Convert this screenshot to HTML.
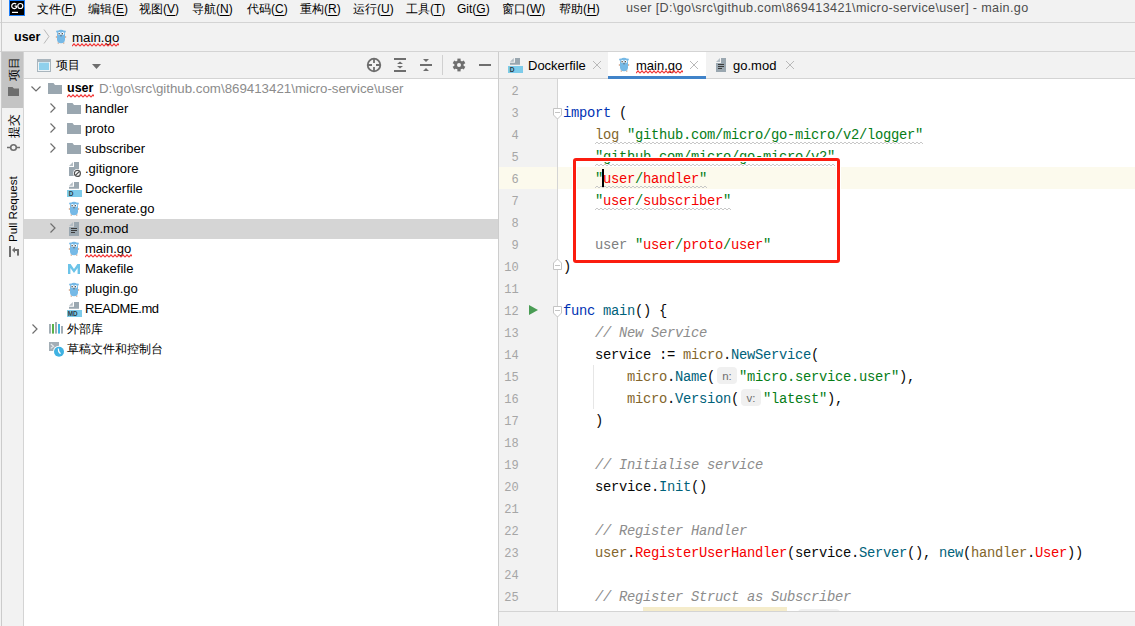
<!DOCTYPE html>
<html><head><meta charset="utf-8">
<style>
*{margin:0;padding:0;box-sizing:border-box}
html,body{width:1135px;height:626px;overflow:hidden;background:#fff;font-family:"Liberation Sans",sans-serif;font-size:13px;color:#000}
.a{position:absolute}
svg{position:absolute;overflow:visible}
#menubar{left:0;top:0;width:1135px;height:23px;background:#f2f2f2;border-bottom:1px solid #d4d4d4}
#menubar span{position:absolute;top:2px;font-size:12px;line-height:14px;white-space:nowrap}
#menubar u{text-decoration:none;border-bottom:1px solid #000;line-height:11px;display:inline-block}
#crumb{left:0;top:23px;width:1135px;height:29px;background:#f2f2f2;border-bottom:1px solid #d4d4d4}
#strip{left:0;top:52px;width:24px;height:574px;background:#f2f2f2;border-right:1px solid #d4d4d4}
#projhdr{left:24px;top:52px;width:475px;height:27px;background:#f2f2f2;border-bottom:1px solid #d4d4d4}
#tree{left:24px;top:79px;width:474px;height:547px;background:#fff}
#vdiv{left:498px;top:52px;width:1px;height:574px;background:#cdcdcd}
#tabs{left:499px;top:52px;width:636px;height:27px;background:#f2f2f2;border-bottom:1px solid #d4d4d4}
#gutter{left:499px;top:79px;width:59px;height:532px;background:#f2f2f2;border-right:1px solid #d4d4d4}
#code{left:558px;top:79px;width:577px;height:532px;background:#fff;overflow:hidden}
#bottom{left:499px;top:611px;width:636px;height:15px;background:#f2f2f2;border-top:1px solid #d4d4d4}
.row{position:absolute;left:0;height:20px;width:474px;white-space:nowrap}
.t{position:absolute;top:2px;font-size:13px;line-height:15px;white-space:nowrap}
.cjk{font-size:12px}
.ln{position:absolute;left:0;margin-top:2px;width:19.6px;text-align:right;font-family:"Liberation Mono",monospace;font-size:12px;line-height:22px;color:#a6a6a6}
.cl{position:absolute;left:5px;margin-top:2px;height:22px;line-height:22px;white-space:pre;font-family:"Liberation Mono",monospace;font-size:13.8px;letter-spacing:-0.28px;color:#080808}
.kw{color:#0033b3}.str{color:#067d17}.cm{color:#8c8c8c;font-style:italic}.pk{color:#83662c}.fn{color:#00627a}.er{color:#f50000}.gr{color:#808080}
.wv{background-image:linear-gradient(45deg,transparent 40%,#c4c4c4 40%,#c4c4c4 60%,transparent 60%),linear-gradient(-45deg,transparent 40%,#c4c4c4 40%,#c4c4c4 60%,transparent 60%);background-size:4px 3px;background-repeat:repeat-x;background-position:0 19px,2px 19px}
.hint{display:inline-block;vertical-align:top;margin-top:0;height:17px;width:20px;margin-left:2px;margin-right:2px;background:#f0f0f0;border-radius:4px;font-family:"Liberation Sans",sans-serif;font-size:11.5px;letter-spacing:0;line-height:19px;color:#6e6e6e;text-align:center;overflow:hidden}
.x{color:#b8b8b8;font-size:15px}
</style></head><body>
<div id="menubar" class="a">
  <div class="a" style="left:9px;top:0;width:16px;height:16px;background:#000;border:1px solid #1a7dfa"></div>
  <svg style="left:9px;top:0" width="16" height="16"><path d="M7.2 4.2 A2.6 2.6 0 1 0 7.4 7.6 L7.4 6.2 L5.6 6.2" fill="none" stroke="#fff" stroke-width="1.2"/><circle cx="11.3" cy="6" r="2.5" fill="none" stroke="#fff" stroke-width="1.2"/><rect x="3" y="11.8" width="6" height="1.2" fill="#fff"/></svg>
  <span style="left:37px">文件(<u>F</u>)</span>
  <span style="left:88px">编辑(<u>E</u>)</span>
  <span style="left:139px">视图(<u>V</u>)</span>
  <span style="left:192px">导航(<u>N</u>)</span>
  <span style="left:247px">代码(<u>C</u>)</span>
  <span style="left:300px">重构(<u>R</u>)</span>
  <span style="left:353px">运行(<u>U</u>)</span>
  <span style="left:406px">工具(<u>T</u>)</span>
  <span style="left:457px">Git(<u>G</u>)</span>
  <span style="left:502px">窗口(<u>W</u>)</span>
  <span style="left:559px">帮助(<u>H</u>)</span>
  <span style="left:626px;top:1px;color:#4d4d4d;font-size:12.6px;letter-spacing:0.35px">user [D:\go\src\github.com\869413421\micro-service\user] - main.go</span>
</div>
<div id="crumb" class="a">
  <span class="a" style="left:14px;top:7px;font-weight:bold;font-size:12.5px;line-height:15px">user</span>
  <svg style="left:43px;top:6px" width="8" height="16"><path d="M1 0.5L6 7.5L1 14.5" fill="none" stroke="#b9b9b9" stroke-width="1"/></svg>
  <svg class="gopher" style="left:56px;top:6px" width="10" height="15" viewBox="0 0 10 15"><use href="#gopher"/></svg>
  <span class="a" style="left:72px;top:7px;font-size:13.3px;line-height:15px">main.go</span>
  <svg style="left:72px;top:20px" width="47" height="4"><rect width="47" height="4" fill="url(#rwave)"/></svg>
</div>

<svg width="0" height="0" style="position:absolute">
  <defs>
    <pattern id="wave" width="4" height="4" patternUnits="userSpaceOnUse"><path d="M0 3L2 1L4 3" fill="none" stroke="#c8c8c8" stroke-width="1"/></pattern>
    <pattern id="rwave" width="4" height="4" patternUnits="userSpaceOnUse"><path d="M0 3.2L2 0.8L4 3.2" fill="none" stroke="#f23535" stroke-width="1.1"/></pattern>
    <g id="gopher">
      <circle cx="1.2" cy="2.6" r="1.1" fill="#76b9e6"/>
      <circle cx="8.8" cy="2.6" r="1.1" fill="#76b9e6"/>
      <ellipse cx="0.5" cy="8" rx="0.8" ry="0.9" fill="#d9b29a"/>
      <ellipse cx="9.5" cy="8" rx="0.8" ry="0.9" fill="#d9b29a"/>
      <ellipse cx="2.3" cy="14.1" rx="0.9" ry="0.8" fill="#d9b29a"/>
      <ellipse cx="7.7" cy="14.1" rx="0.9" ry="0.8" fill="#d9b29a"/>
      <path d="M1 5 Q1 0.8 5 0.8 Q9 0.8 9 5 L9 10.3 Q9 14.3 5 14.3 Q1 14.3 1 10.3Z" fill="#76b9e6"/>
      <circle cx="3.4" cy="4.6" r="1.5" fill="#fff"/>
      <circle cx="6.6" cy="4.6" r="1.5" fill="#fff"/>
      <circle cx="3.1" cy="4.8" r="0.75" fill="#3a3a3a"/>
      <circle cx="6.3" cy="4.8" r="0.75" fill="#3a3a3a"/>
      <rect x="4.3" y="6.2" width="1.4" height="1.1" fill="#666"/>
    </g>
    <g id="folder">
      <path d="M0 0 H5.5 L7 2 H14 V11 H0Z" fill="#9aa7b0"/>
    </g>
    <g id="doc">
      <path d="M0 4L4 0V4Z" fill="#b3bdc4"/>
      <path d="M5 0H10V14H0V5H5Z" fill="#9aa7b0"/>
    </g>
    <g id="dtop">
      <path d="M0 3.8L3.8 0V3.8Z" fill="#b3bdc4"/>
      <path d="M5 0H10V6.8H0V4.8H5Z" fill="#9aa7b0"/>
    </g>
  </defs>
</svg>

<div id="strip" class="a">
  <div class="a" style="left:2px;top:0;width:21px;height:56px;background:#c4c4c4"></div>
  <div class="a" style="left:8px;top:29px;transform:rotate(-90deg);transform-origin:0 0;font-size:12px;line-height:12px;white-space:nowrap">项目</div>
  <svg style="left:8px;top:35px" width="11" height="9"><path d="M0 0H4.5L6 1.6H11V9H0Z" fill="#6e6e6e"/></svg>
  <div class="a" style="left:8px;top:86px;transform:rotate(-90deg);transform-origin:0 0;font-size:12px;line-height:12px;white-space:nowrap">提交</div>
  <svg style="left:7px;top:91px" width="13" height="9"><circle cx="6.5" cy="4.5" r="2.8" fill="none" stroke="#6e6e6e" stroke-width="1.6"/><path d="M0 4.5H3.5M9.5 4.5H13" stroke="#6e6e6e" stroke-width="1.6"/></svg>
  <div class="a" style="left:7px;top:190px;transform:rotate(-90deg);transform-origin:0 0;font-size:11.6px;line-height:12px;white-space:nowrap">Pull Request</div>
  <svg style="left:8px;top:193px" width="13" height="13"><rect x="1" y="1" width="2" height="11" fill="#6e6e6e"/><path d="M4 5L7 2V8Z" fill="#6e6e6e"/><rect x="6.5" y="4" width="4.5" height="2" fill="#6e6e6e"/><rect x="9" y="4" width="2" height="6.6" fill="#6e6e6e"/></svg>
</div>

<div id="projhdr" class="a">
  <svg style="left:13px;top:7px" width="14" height="13"><rect x="0" y="0" width="14" height="13" fill="#a9b5bd"/><rect x="1" y="3" width="12" height="9" fill="#eef4f7"/><rect x="2" y="3.6" width="10" height="7.4" fill="#8fd0ec"/></svg>
  <span class="a" style="left:32px;top:6px;font-size:12px;line-height:15px">项目</span>
  <svg style="left:68px;top:12px" width="9" height="5"><path d="M0 0H9L4.5 5Z" fill="#6e6e6e"/></svg>
  <svg style="left:342px;top:5px" width="16" height="16"><circle cx="8" cy="8" r="6.3" fill="none" stroke="#6e6e6e" stroke-width="1.8"/><path d="M8 1.5V6M8 10V14.5M1.5 8H6M10 8H14.5" stroke="#6e6e6e" stroke-width="1.8"/></svg>
  <svg style="left:370px;top:6px" width="12" height="14"><path d="M0 1H12M0 13H12" stroke="#6e6e6e" stroke-width="2"/><path d="M6 3.5L9 6H3Z M3 8H9L6 10.5Z" fill="#6e6e6e"/></svg>
  <svg style="left:396px;top:6px" width="12" height="14"><path d="M0 7H12" stroke="#6e6e6e" stroke-width="2"/><path d="M3 1H9L6 4Z M6 10L9 13H3Z" fill="#6e6e6e"/></svg>
  <div class="a" style="left:418px;top:3px;width:1px;height:20px;background:#d0d0d0"></div>
  <svg style="left:428px;top:6px" width="14" height="14" viewBox="-7 -7 14 14"><g fill="#6e6e6e"><circle r="4.6"/><rect x="-1.6" y="-6.4" width="3.2" height="12.8"/><rect x="-1.6" y="-6.4" width="3.2" height="12.8" transform="rotate(60)"/><rect x="-1.6" y="-6.4" width="3.2" height="12.8" transform="rotate(120)"/></g><circle r="2" fill="#f2f2f2"/></svg>
  <div class="a" style="left:455px;top:12px;width:12px;height:2px;background:#6e6e6e"></div>
</div>

<div id="tree" class="a">
  <div class="row" style="top:0">
    <svg style="left:7px;top:7px" width="10" height="6"><path d="M0.5 0.5L5 5L9.5 0.5" fill="none" stroke="#6e6e6e" stroke-width="1.2"/></svg>
    <svg style="left:24px;top:4px" width="14" height="11"><use href="#folder"/></svg>
    <span class="t" style="left:43px;font-weight:bold;font-size:12.5px">user</span>
    <svg style="left:43px;top:15px" width="27" height="4"><rect width="27" height="4" fill="url(#rwave)"/></svg>
    <span class="t" style="left:75px;color:#8c8c8c;font-size:13.3px">D:\go\src\github.com\869413421\micro-service\user</span>
  </div>
  <div class="row" style="top:20px">
    <svg style="left:26px;top:4px" width="6" height="10"><path d="M0.5 0.5L5 5L0.5 9.5" fill="none" stroke="#6e6e6e" stroke-width="1.2"/></svg>
    <svg style="left:43px;top:4px" width="14" height="11"><use href="#folder"/></svg>
    <span class="t" style="left:61px">handler</span>
  </div>
  <div class="row" style="top:40px">
    <svg style="left:26px;top:4px" width="6" height="10"><path d="M0.5 0.5L5 5L0.5 9.5" fill="none" stroke="#6e6e6e" stroke-width="1.2"/></svg>
    <svg style="left:43px;top:4px" width="14" height="11"><use href="#folder"/></svg>
    <span class="t" style="left:61px">proto</span>
  </div>
  <div class="row" style="top:60px">
    <svg style="left:26px;top:4px" width="6" height="10"><path d="M0.5 0.5L5 5L0.5 9.5" fill="none" stroke="#6e6e6e" stroke-width="1.2"/></svg>
    <svg style="left:43px;top:4px" width="14" height="11"><use href="#folder"/></svg>
    <span class="t" style="left:61px">subscriber</span>
  </div>
  <div class="row" style="top:80px">
    <svg style="left:45px;top:3px" width="10" height="14"><use href="#doc"/></svg>
    <svg style="left:49px;top:10px" width="9" height="9"><circle cx="4.4" cy="4.4" r="4.3" fill="#fff"/><circle cx="4.4" cy="4.4" r="3" fill="none" stroke="#505050" stroke-width="1.2"/><path d="M2.3 6.5L6.5 2.3" stroke="#505050" stroke-width="1.2"/></svg>
    <span class="t" style="left:61px">.gitignore</span>
  </div>
  <div class="row" style="top:100px">
    <svg style="left:43px;top:3px" width="15" height="15"><g transform="translate(2,0)"><use href="#dtop"/></g><rect x="0" y="8" width="15" height="7" fill="#7ccbea"/><text x="1.8" y="13.6" font-size="6.5" font-weight="bold" fill="#2b3a45" font-family="Liberation Sans">D</text></svg>
    <span class="t" style="left:61px">Dockerfile</span>
  </div>
  <div class="row" style="top:120px">
    <svg style="left:45px;top:2px" width="10" height="15" viewBox="0 0 10 15"><use href="#gopher"/></svg>
    <span class="t" style="left:61px">generate.go</span>
  </div>
  <div class="row" style="top:140px;background:#d5d5d5">
    <svg style="left:26px;top:4px" width="6" height="10"><path d="M0.5 0.5L5 5L0.5 9.5" fill="none" stroke="#6e6e6e" stroke-width="1.2"/></svg>
    <svg style="left:45px;top:3px" width="10" height="14"><use href="#doc"/><path d="M2 6.5H8M2 8.5H8M2 10.5H6" stroke="#3c3c3c" stroke-width="1"/></svg>
    <span class="t" style="left:61px">go.mod</span>
  </div>
  <div class="row" style="top:160px">
    <svg style="left:45px;top:2px" width="10" height="15" viewBox="0 0 10 15"><use href="#gopher"/></svg>
    <span class="t" style="left:61px">main.go</span>
    <svg style="left:61px;top:15px" width="47" height="4"><rect width="47" height="4" fill="url(#rwave)"/></svg>
  </div>
  <div class="row" style="top:180px">
    <svg style="left:44px;top:5px" width="12" height="10"><path d="M0 10V0H2.6L6 5L9.4 0H12V10H9.6V4L6 9L2.4 4V10Z" fill="#6cc3e8"/></svg>
    <span class="t" style="left:61px">Makefile</span>
  </div>
  <div class="row" style="top:200px">
    <svg style="left:45px;top:3px" width="10" height="15" viewBox="0 0 10 15"><use href="#gopher"/></svg>
    <span class="t" style="left:61px">plugin.go</span>
  </div>
  <div class="row" style="top:220px">
    <svg style="left:43px;top:3px" width="15" height="15"><g transform="translate(2,0)"><use href="#dtop"/></g><rect x="0" y="8" width="15" height="7" fill="#7ccbea"/><text x="0.8" y="13.6" font-size="6.3" fill="#2b3a45" font-family="Liberation Sans" font-weight="bold">MD</text></svg>
    <span class="t" style="left:61px;letter-spacing:-0.4px">README.md</span>
  </div>
  <div class="row" style="top:240px">
    <svg style="left:8px;top:5px" width="6" height="10"><path d="M0.5 0.5L5 5L0.5 9.5" fill="none" stroke="#6e6e6e" stroke-width="1.2"/></svg>
    <svg style="left:24px;top:3px" width="16" height="12"><rect x="1" y="2" width="2" height="9.6" fill="#a3aeb6"/><rect x="4" y="2" width="2" height="9.6" fill="#59b24a"/><rect x="7" y="0" width="2" height="11.6" fill="#a3aeb6"/><rect x="10" y="2" width="2" height="9.6" fill="#40b6e0"/><rect x="13" y="4" width="2" height="7.6" fill="#a3aeb6"/></svg>
    <span class="t cjk" style="left:43px;top:3px">外部库</span>
  </div>
  <div class="row" style="top:260px">
    <svg style="left:24px;top:3px" width="18" height="16"><path d="M1 0H11V9H1Z" fill="#a3aeb6"/><path d="M2.8 2L5.6 4.2L2.8 6.4" fill="none" stroke="#e6eaed" stroke-width="1.1"/><circle cx="11" cy="9.8" r="6" fill="#fff"/><circle cx="11" cy="9.8" r="5" fill="#3fb2e2"/><path d="M10.3 6.5Q10 9.5 12.5 11.8" fill="none" stroke="#fff" stroke-width="1.2"/></svg>
    <span class="t cjk" style="left:43px;top:3px">草稿文件和控制台</span>
  </div>
</div>

<div id="vdiv" class="a"></div>
<div class="a" style="left:1px;top:0;width:1px;height:626px;background:#cbcbcb;z-index:5"></div>

<div id="tabs" class="a">
  <svg style="left:9px;top:6px" width="15" height="15"><g transform="translate(2,0)"><use href="#dtop"/></g><rect x="0" y="8" width="15" height="7" fill="#7ccbea"/><text x="1.8" y="13.6" font-size="6.5" font-weight="bold" fill="#2b3a45" font-family="Liberation Sans">D</text></svg>
  <span class="t" style="left:29px;top:6px">Dockerfile</span>
  <svg style="left:94px;top:9px" width="8" height="8"><path d="M0 0L8 8M8 0L0 8" stroke="#b9b9b9" stroke-width="1"/></svg>
  <div class="a" style="left:109px;top:0;width:98px;height:27px;background:#fff;border-bottom:3px solid #4083c9"></div>
  <svg style="left:120px;top:5px" width="10" height="15" viewBox="0 0 10 15"><use href="#gopher"/></svg>
  <span class="t" style="left:137px;top:6px">main.go</span>
  <svg style="left:137px;top:18px" width="47" height="4"><rect width="47" height="4" fill="url(#rwave)"/></svg>
  <svg style="left:191px;top:9px" width="8" height="8"><path d="M0 0L8 8M8 0L0 8" stroke="#b9b9b9" stroke-width="1"/></svg>
  <svg style="left:217px;top:6px" width="10" height="14"><use href="#doc"/><path d="M2 6.5H8M2 8.5H8M2 10.5H6" stroke="#3c3c3c" stroke-width="1"/></svg>
  <span class="t" style="left:234px;top:6px">go.mod</span>
  <svg style="left:287px;top:9px" width="8" height="8"><path d="M0 0L8 8M8 0L0 8" stroke="#b9b9b9" stroke-width="1"/></svg>
</div>

<div id="gutter" class="a">
  <div class="a" style="left:0;top:88px;width:58px;height:22px;background:#fcfaed"></div>
</div>
<div class="a" style="left:499px;top:79px;width:59px;height:532px;z-index:2">
  <div class="ln" style="top:0">2</div>
  <div class="ln" style="top:22px">3</div>
  <div class="ln" style="top:44px">4</div>
  <div class="ln" style="top:66px">5</div>
  <div class="ln" style="top:88px">6</div>
  <div class="ln" style="top:110px">7</div>
  <div class="ln" style="top:132px">8</div>
  <div class="ln" style="top:154px">9</div>
  <div class="ln" style="top:176px">10</div>
  <div class="ln" style="top:198px">11</div>
  <div class="ln" style="top:220px">12</div>
  <div class="ln" style="top:242px">13</div>
  <div class="ln" style="top:264px">14</div>
  <div class="ln" style="top:286px">15</div>
  <div class="ln" style="top:308px">16</div>
  <div class="ln" style="top:330px">17</div>
  <div class="ln" style="top:352px">18</div>
  <div class="ln" style="top:374px">19</div>
  <div class="ln" style="top:396px">20</div>
  <div class="ln" style="top:418px">21</div>
  <div class="ln" style="top:440px">22</div>
  <div class="ln" style="top:462px">23</div>
  <div class="ln" style="top:484px">24</div>
  <div class="ln" style="top:506px">25</div>
  <svg style="left:30px;top:226px" width="9" height="10"><path d="M0 0L9 5L0 10Z" fill="#499c54"/></svg>
  <svg style="left:54px;top:29px" width="9" height="12"><path d="M0.5 0.5H8.5V7L4.5 11L0.5 7Z" fill="#fff" stroke="#c4c4c4" stroke-width="1"/><path d="M2 4.5H7" stroke="#c4c4c4"/></svg>
  <svg style="left:54px;top:179px" width="9" height="12"><path d="M0.5 11.5H8.5V5L4.5 1L0.5 5Z" fill="#fff" stroke="#c4c4c4" stroke-width="1"/><path d="M2 7.5H7" stroke="#c4c4c4"/></svg>
  <svg style="left:54px;top:227px" width="9" height="12"><path d="M0.5 0.5H8.5V7L4.5 11L0.5 7Z" fill="#fff" stroke="#c4c4c4" stroke-width="1"/><path d="M2 4.5H7" stroke="#c4c4c4"/></svg>
</div>

<div id="code" class="a">
  <div class="a" style="left:0;top:88px;width:577px;height:22px;background:#fcfaed"></div>
  <div class="a" style="left:35px;top:286px;width:1px;height:44px;background:#e6e6e6"></div>
  <svg style="left:37px;top:62px" width="328" height="4"><rect width="328" height="4" fill="url(#wave)"/></svg>
  <svg style="left:37px;top:84px" width="240" height="4"><rect width="240" height="4" fill="url(#wave)"/></svg>
  <svg style="left:37px;top:106px" width="112" height="4"><rect width="112" height="4" fill="url(#wave)"/></svg>
  <svg style="left:37px;top:128px" width="136" height="4"><rect width="136" height="4" fill="url(#wave)"/></svg>
  <div class="cl" style="top:22px"><span class="kw">import</span> (</div>
  <div class="cl" style="top:44px">    <span><span class="pk">log</span> <span class="str">"github.com/micro/go-micro/v2/logger"</span></span></div>
  <div class="cl" style="top:66px">    <span class="str">"github.com/micro/go-micro/v2"</span></div>
  <div class="cl" style="top:88px">    <span class="str">"<span class="er">user</span>/<span class="er">handler</span>"</span></div>
  <div class="cl" style="top:110px">    <span class="str">"<span class="er">user</span>/<span class="er">subscriber</span>"</span></div>
  <div class="cl" style="top:154px">    <span class="gr">user</span> <span class="str">"<span class="er">user</span>/<span class="er">proto</span>/<span class="er">user</span>"</span></div>
  <div class="cl" style="top:176px">)</div>
  <div class="cl" style="top:220px"><span class="kw">func</span> <span class="fn">main</span>() {</div>
  <div class="cl" style="top:242px">    <span class="cm">// New Service</span></div>
  <div class="cl" style="top:264px">    service := <span class="pk">micro</span>.<span class="fn">NewService</span>(</div>
  <div class="cl" style="top:286px">        <span class="pk">micro</span>.<span class="fn">Name</span>(<span class="hint">n:</span><span class="str">"micro.service.user"</span>),</div>
  <div class="cl" style="top:308px">        <span class="pk">micro</span>.<span class="fn">Version</span>(<span class="hint">v:</span><span class="str">"latest"</span>),</div>
  <div class="cl" style="top:330px">    )</div>
  <div class="cl" style="top:374px">    <span class="cm">// Initialise service</span></div>
  <div class="cl" style="top:396px">    service.<span class="fn">Init</span>()</div>
  <div class="cl" style="top:440px">    <span class="cm">// Register Handler</span></div>
  <div class="cl" style="top:462px">    <span class="pk">user</span>.<span class="er">RegisterUserHandler</span>(service.<span class="fn">Server</span>(), <span class="fn">new</span>(<span class="pk">handler</span>.<span class="er">User</span>))</div>
  <div class="cl" style="top:506px">    <span class="cm">// Register Struct as Subscriber</span></div>
  <div class="a" style="left:85px;top:528px;width:144px;height:10px;background:#f5eccb"></div>
  <div class="a" style="left:240px;top:530px;width:42px;height:10px;background:#efefef;border-radius:4px"></div>
  <div class="a" style="left:44px;top:90px;width:2px;height:18px;background:#000"></div>
</div>
<div id="bottom" class="a"></div>

<div class="a" style="left:573px;top:158px;width:267px;height:105px;border:3px solid #fb1c0f;border-radius:3px;box-shadow:0 0 0 1px #fff, inset 0 0 0 1px #fff"></div>
</body></html>
